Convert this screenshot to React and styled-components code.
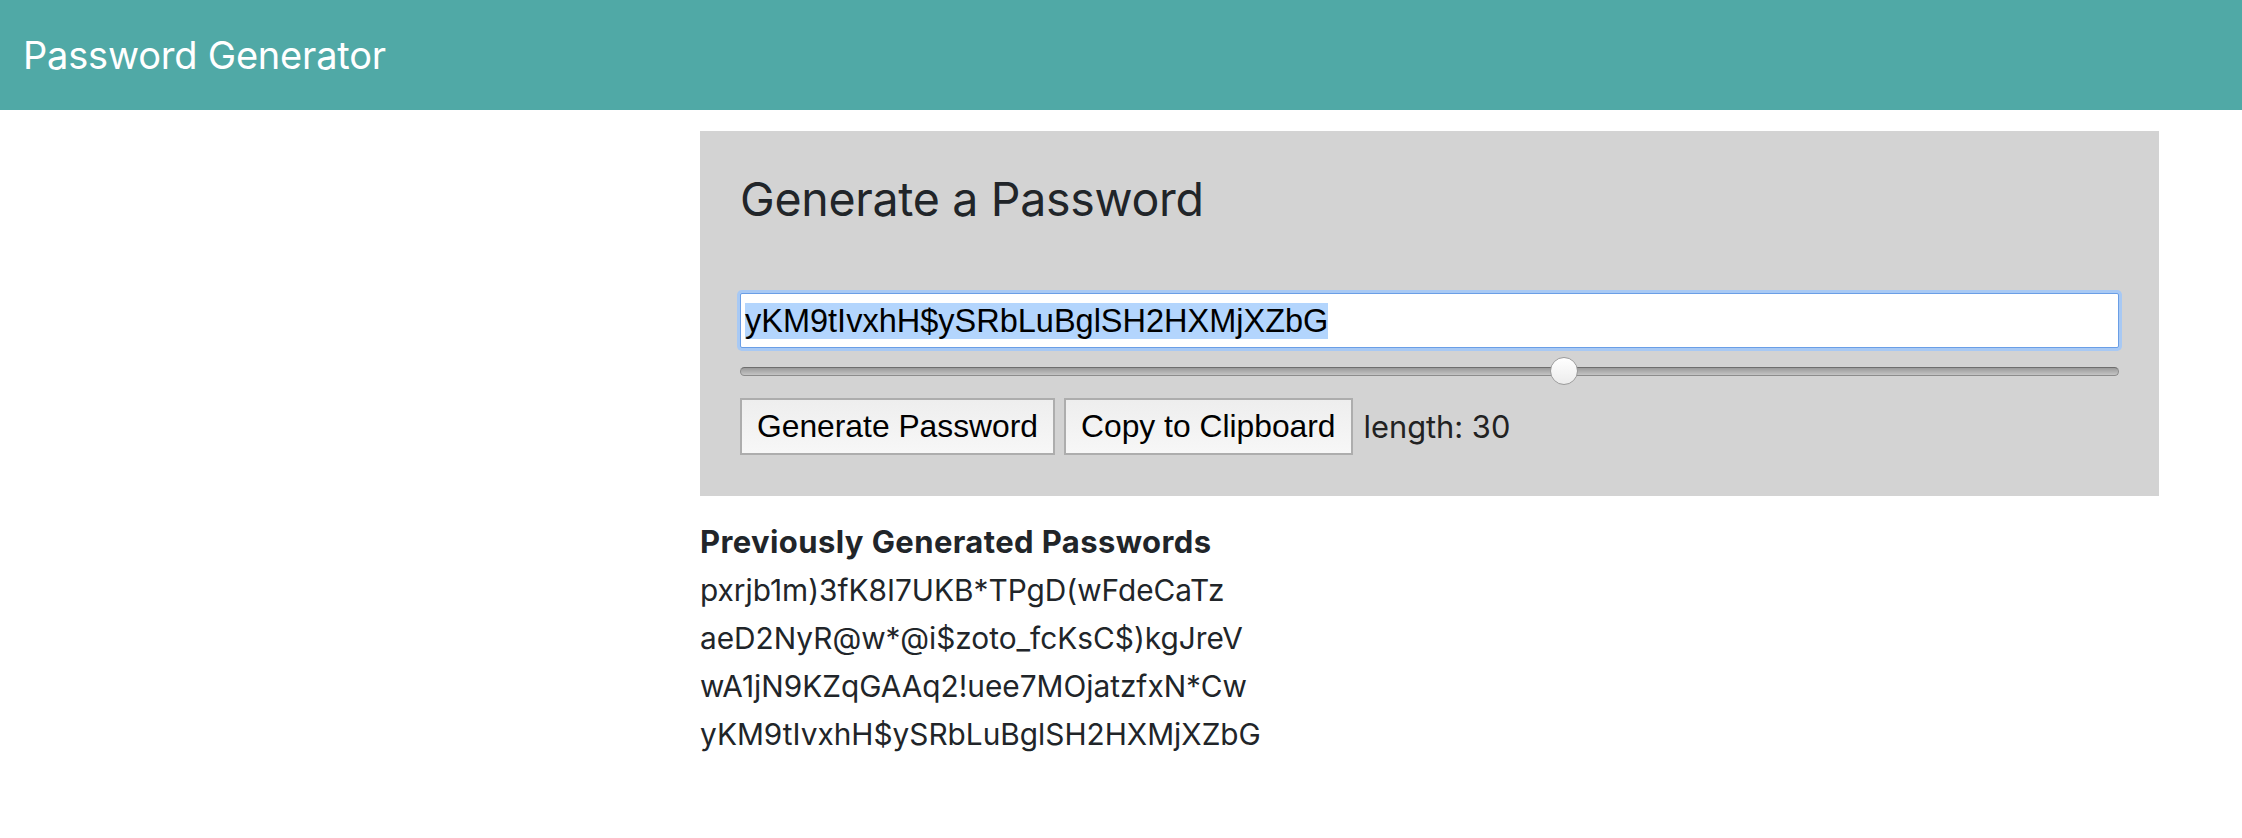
import React from 'react';
import styled, { createGlobalStyle } from 'styled-components';

// === Global ===

const GlobalStyle = createGlobalStyle`
  body {
    margin: 0;
    background: #ffffff;
    color: #212529;
    font-family: Inter, "Liberation Sans", sans-serif;
  }
`;

// === Styled Components ===

const NavBar = styled.header`
  height: 110px;
  background: #50a9a6;
  display: flex;
  align-items: center;
  padding-left: 23px;
  box-sizing: border-box;
`;

const Brand = styled.h1`
  margin: 0;
  font-size: 38px;
  font-weight: 400;
  color: #ffffff;
  letter-spacing: -0.2px;
`;

const Main = styled.main`
  margin-left: 700px;
  width: 1459px;
  padding-top: 21px;
`;

// 生成器卡片
const Card = styled.section`
  background: #d3d3d3;
  padding: 40px 40px 41px;
`;

const CardTitle = styled.h2`
  margin: 0 0 66px;
  font-size: 46.5px;
  line-height: 56px;
  font-weight: 400;
  letter-spacing: -0.3px;
`;

// 输入框 (Helvetica 风格，选中状态)
const PasswordField = styled.div`
  height: 55px;
  box-sizing: border-box;
  background: #ffffff;
  border: 1px solid #6a9ee6;
  box-shadow: 0 0 0 3px #a8c9f4;
  border-radius: 2px;
  display: flex;
  align-items: center;
  padding: 0 4px;
  font-family: "Liberation Sans", Arial, sans-serif;
  font-size: 32.5px;
  color: #000000;
`;

const Selected = styled.span`
  background: #b3d5fd;
  line-height: 36px;
`;

const LengthSlider = styled.input`
  -webkit-appearance: none;
  appearance: none;
  display: block;
  width: 100%;
  height: 28px;
  margin: 9px 0 0;
  background: transparent;

  &::-webkit-slider-runnable-track {
    height: 9px;
    box-sizing: border-box;
    border-radius: 5px;
    background: linear-gradient(#9a9a9a, #c4c4c4);
    border: 1px solid #8c8c8c;
    border-top-color: #6e6e6e;
  }

  &::-webkit-slider-thumb {
    -webkit-appearance: none;
    width: 28px;
    height: 28px;
    margin-top: -10.5px;
    border-radius: 50%;
    box-sizing: border-box;
    border: 1px solid #9b9b9b;
    background: linear-gradient(#ffffff, #ececec);
  }
`;

const ButtonRow = styled.div`
  display: flex;
  align-items: center;
  margin-top: 13px;
`;

const Button = styled.button`
  height: 57px;
  box-sizing: border-box;
  padding: 0 ${p => p.$pad}px;
  margin-right: 9px;
  font-family: "Liberation Sans", Arial, sans-serif;
  font-size: 31.8px;
  color: #000000;
  background: linear-gradient(#eeeeee, #f7f7f7);
  border: 2px solid #adadad;
  border-radius: 0;
`;

const LengthLabel = styled.span`
  margin-left: 2px;
  font-size: 30.8px;
  color: #222222;
`;

// 历史记录
const History = styled.section`
  margin-top: 22px;
  font-size: 29.8px;
  line-height: 48px;
`;

const HistoryTitle = styled.h3`
  margin: 0;
  font-size: 31px;
  line-height: 48px;
  font-weight: 700;
  letter-spacing: 0.4px;
`;

const HistoryItem = styled.div`
  white-space: nowrap;
`;

// === Data ===

const current = 'yKM9tIvxhH$ySRbLuBglSH2HXMjXZbG';

const previous = [
  'pxrjb1m)3fK8I7UKB*TPgD(wFdeCaTz',
  'aeD2NyR@w*@i$zoto_fcKsC$)kgJreV',
  'wA1jN9KZqGAAq2!uee7MOjatzfxN*Cw',
  current,
];

const App = () => {
  return (
    <>
      <GlobalStyle />
      <NavBar>
        <Brand>Password Generator</Brand>
      </NavBar>

      <Main>
        <Card>
          <CardTitle>Generate a Password</CardTitle>
          <PasswordField>
            <Selected>{current}</Selected>
          </PasswordField>
          <LengthSlider type="range" min={0} max={50} defaultValue={30} />
          <ButtonRow>
            <Button $pad={15}>Generate Password</Button>
            <Button $pad={15}>Copy to Clipboard</Button>
            <LengthLabel>length: 30</LengthLabel>
          </ButtonRow>
        </Card>

        <History>
          <HistoryTitle>Previously Generated Passwords</HistoryTitle>
          {previous.map((pw, i) => (
            <HistoryItem key={i}>{pw}</HistoryItem>
          ))}
        </History>
      </Main>
    </>
  );
};

export default App;
